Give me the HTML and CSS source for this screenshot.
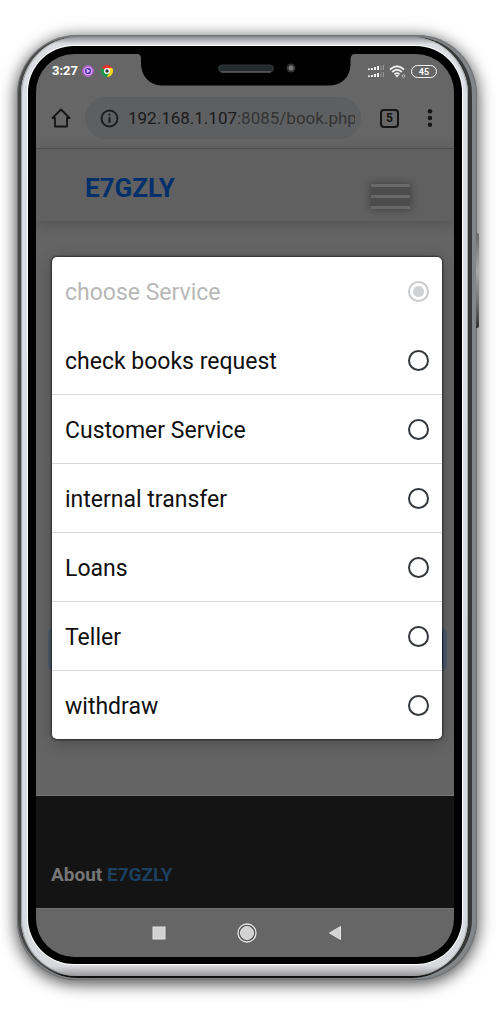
FILE: index.html
```html
<!DOCTYPE html>
<html lang="en">
<head>
<meta charset="utf-8">
<meta name="viewport" content="width=device-width, initial-scale=1">
<title>E7GZLY</title>
<link rel="stylesheet" href="styles.css">
</head>
<body>
<div class="phone">
  <span class="side-key"></span>
  <div class="rim">
    <div class="bezel">
      <div class="screen">
        <svg class="notch" viewBox="0 0 218 32" aria-hidden="true">
          <path d="M0 0C3 0 4 2 4 5V11C5 23 13 31 24 31.500H193C205 31 213 23 213.500 11V5C213.500 2 215 0 218 0Z" fill="#000"/>
          <rect x="81.500" y="11" width="55" height="7" rx="3.500" fill="#222b2e" stroke="#33393b"/>
          <path d="M84 18H134" stroke="#777" />
          <circle cx="154" cy="14" r="4.500" fill="#333"/>
          <circle cx="154" cy="14" r="2.500" fill="#777"/>
        </svg>
        <header class="status">
          <span class="clock">3:27</span>
          <svg class="app-icon" viewBox="0 0 12 12" aria-hidden="true">
            <circle cx="6" cy="6" r="5.300" fill="#b04ad8" stroke="#c76be0"/>
            <circle cx="6" cy="6" r="3.800" fill="#5a2fb5" stroke="#f1e6fb" stroke-width=".8"/>
            <path d="M4.700 3.700 8.300 6 4.700 8.300Z" fill="#d9b9f5"/>
          </svg>
          <svg class="app-icon chrome" viewBox="0 0 12 12" aria-hidden="true">
            <path d="M6 6 .8 3A6 6 0 0 1 11.200 3Z" fill="#e8302a"/>
            <path d="M6 6V3H11.200A6 6 0 0 1 6 12Z" fill="#fbd51c"/>
            <path d="M6 6 8.600 7.500 6 12A6 6 0 0 1 .8 3Z" fill="#159b48"/>
            <circle cx="6" cy="6" r="3" fill="#fff"/>
            <circle cx="6" cy="6" r="1.700" fill="#333"/>
          </svg>
          <svg class="signal" viewBox="0 0 16 12" aria-hidden="true">
            <path d="M1 5V3.500M4 5V3M7 5V2M10 5V1M1 12V10.500M4 12V10M7 12V9M10 12V8" stroke="#eee" stroke-width="2"/>
            <path d="M13 5V0.500M15.500 5V0M13 12V7.500M15.500 12V7" stroke="#999"/>
          </svg>
          <svg class="wifi" viewBox="0 0 17 13" aria-hidden="true">
            <path d="M1 4.500Q8 -2 15 4.500M3.200 7Q8 2.500 12.800 7M5.400 9.300Q8 7 10.600 9.300" fill="none" stroke="#eee" stroke-width="1.800"/>
            <path d="M6 10.300Q8 9 10 10.300L8 12.500Z" fill="#eee"/>
            <circle cx="14.500" cy="11" r="1.300" fill="none" stroke="#bbb"/>
          </svg>
          <span class="battery">45</span>
        </header>
        <div class="toolbar">
          <button class="tool" aria-label="Home">
            <svg width="20" height="20" viewBox="0 0 20 20"><path d="M1.500 10 10 1.500 18.500 10H16V18.500H4V10Z" fill="none" stroke="#151515" stroke-width="1.800" stroke-linejoin="round"/></svg>
          </button>
          <button class="address" aria-label="Address">
            <svg width="19" height="19" viewBox="0 0 19 19"><circle cx="9.500" cy="9.500" r="8" fill="none" stroke="#1c1c1c" stroke-width="1.900"/><path d="M9.500 8V14M9.500 4.700V6.600" stroke="#1c1c1c" stroke-width="2"/></svg>
            <span class="url"><span class="host">192.168.1.107</span>:8085/book.php</span>
          </button>
          <button class="tabs">5</button>
          <button class="tool" aria-label="Menu">
            <svg width="6" height="18" viewBox="0 0 6 18"><g fill="#151515"><circle cx="3" cy="2.300" r="2.200"/><circle cx="3" cy="9" r="2.200"/><circle cx="3" cy="15.700" r="2.200"/></g></svg>
          </button>
        </div>
        <nav class="site-nav">
          <a class="brand" href="#">E7GZLY</a>
          <button class="burger" aria-label="Navigation"><span></span><span></span><span></span></button>
        </nav>
        <main class="page">
          <span class="submit-glow"></span>
          <fieldset class="picker" aria-label="choose Service">
            <label class="option disabled">choose Service<input type="radio" name="service" checked disabled></label>
            <label class="option">check books request<input type="radio" name="service"></label>
            <label class="option">Customer Service<input type="radio" name="service"></label>
            <label class="option">internal transfer<input type="radio" name="service"></label>
            <label class="option">Loans<input type="radio" name="service"></label>
            <label class="option">Teller<input type="radio" name="service"></label>
            <label class="option">withdraw<input type="radio" name="service"></label>
          </fieldset>
        </main>
        <footer class="about">About <a href="#">E7GZLY</a></footer>
        <div class="keys">
          <button aria-label="Recent apps"><svg width="14" height="14" viewBox="0 0 14 14"><rect x="1" y="1" width="12" height="12" fill="#d2d2d2" stroke="#e2e2e2"/></svg></button>
          <button aria-label="Home"><svg width="20" height="20" viewBox="0 0 20 20"><circle cx="10" cy="10" r="9" fill="#555" stroke="#e8e8e8" stroke-width="1.300"/><circle cx="10" cy="10" r="6.500" fill="#d2d2d2" stroke="#e2e2e2"/></svg></button>
          <button aria-label="Back"><svg width="14" height="16" viewBox="0 0 14 16"><path d="M1.500 8 12.500 1.500V14.500Z" fill="#d2d2d2" stroke="#e2e2e2"/></svg></button>
        </div>
      </div>
    </div>
  </div>
</div>
</body>
</html>
```
FILE: styles.css
```css
* { box-sizing: border-box; }

body {
  margin: 0;
  padding: 35px 19px 37px 17px;
  background: #fff;
  font-family: Roboto, "Liberation Sans", sans-serif;
}

button {
  border: 0;
  padding: 0;
  background: none;
  font: inherit;
  color: inherit;
}

a { color: inherit; text-decoration: none; }

svg { display: block; flex: none; }

.phone {
  position: relative;
  padding: 2px 9px 4px 4px;
  border-radius: 60px;
  background: #84878a;
  box-shadow: 0 3px 16px 1px rgba(0, 0, 0, .7), inset 0 0 2px #444;
}

.side-key {
  position: absolute;
  top: 198px;
  right: -2px;
  width: 3px;
  height: 95px;
  border-radius: 0 2px 2px 0;
  background: linear-gradient(#666, #aaa 40%, #777 70%, #333);
}

.rim {
  padding: 9px 6px 12px 7px;
  border-radius: 57px;
  background: linear-gradient(#909294 0, #dcdde2 7px, #dcdfe6 60px, #d8dbe3 calc(100% - 60px), #d8d9dd calc(100% - 10px), #9a9a9c 100%);
  box-shadow: 4px 0 0 #383838, -3px 0 0 #484848, 0 2px 0 #111, inset 1px 0 1px #999, inset -1px 0 1px #aaa;
}

.bezel {
  padding: 8px 8px 7px;
  border-radius: 46px;
  background: #000;
  box-shadow: 0 0 0 1px #fff;
}

.screen {
  position: relative;
  overflow: hidden;
  border-radius: 38px;
  background: #666;
}

.notch {
  position: absolute;
  top: 0;
  left: 50%;
  width: 218px;
  height: 32px;
  margin-left: -108px;
}

.status {
  display: flex;
  align-items: center;
  height: 34px;
  padding: 0 17px 0 16px;
  color: #fff;
}

.clock { font-size: 13px; font-weight: 700; line-height: 34px; }

.app-icon { width: 12px; height: 12px; margin-left: 4px; }

.chrome { margin-left: 7px; }

.signal { width: 16px; height: 12px; margin-left: auto; }

.wifi { width: 17px; height: 13px; margin: 0 5px; }

.battery {
  width: 26px;
  height: 13px;
  border: 1px solid #f4f4f4;
  border-radius: 7px;
  font-size: 9px;
  font-weight: 700;
  line-height: 12px;
  text-align: center;
}

.toolbar {
  display: flex;
  align-items: center;
  height: 60px;
  padding: 0 21px 0 15px;
}

.address {
  display: flex;
  flex: 1;
  align-items: center;
  gap: 9px;
  min-width: 0;
  height: 42px;
  margin: 0 19px 0 14px;
  padding: 0 6px 0 15px;
  border-radius: 21px;
  background: #5e5f61;
  color: #333;
  font-size: 17px;
}

.url { flex: 1; overflow: hidden; white-space: nowrap; text-align: left; }

.host { color: #1a1a1a; }

.tabs {
  width: 19px;
  height: 19px;
  margin-right: 28px;
  border: 2px solid #151515;
  border-radius: 4px;
  color: #151515;
  font-size: 12px;
  font-weight: 700;
  line-height: 15px;
}

.site-nav {
  position: relative;
  z-index: 1;
  display: flex;
  align-items: center;
  justify-content: space-between;
  height: 73px;
  padding: 6px 44px 0 49px;
  border-top: 1px solid #4d4d4d;
  background: #606060;
  box-shadow: 0 2px 14px rgba(0, 0, 0, .2);
}

.brand {
  color: #00306c;
  font-size: 26px;
  font-weight: 700;
}

.burger {
  display: grid;
  gap: 8px;
  width: 39px;
  margin-top: 16px;
  background: rgba(0, 0, 0, .2);
  box-shadow: 0 0 8px 1px rgba(0, 0, 0, .3);
}

.burger span { height: 3px; background: #686868; }

.page {
  position: relative;
  padding: 36px 12px 56px 16px;
  background: #646464;
}

.submit-glow {
  position: absolute;
  top: 406px;
  right: 7px;
  left: 12px;
  height: 45px;
  border: 4px solid #4b5a6b;
  border-radius: 7px;
  background: #294666;
}

.picker {
  position: relative;
  margin: 0;
  padding: 0;
  border: 0;
  border-radius: 5px;
  background: #fff;
  box-shadow: 0 0 2px 1px rgba(0, 0, 0, .5), 0 4px 16px rgba(0, 0, 0, .25);
}

.option {
  display: flex;
  align-items: center;
  justify-content: space-between;
  height: 69px;
  padding: 3px 13px 0;
  border-bottom: 1px solid #d8d8d8;
  color: #101010;
  font-size: 23px;
}

.option.disabled { border-color: transparent; color: #b8b8b8; }

.option:last-child { height: 68px; border-bottom: 0; }

.option input {
  width: 21px;
  height: 21px;
  margin: 0 0 3px;
  border: 2px solid #34373c;
  border-radius: 50%;
  appearance: none;
}

.option input:disabled {
  border-color: #c9cbcd;
  background: radial-gradient(circle, #d0d1d3 5px, #fff 6px);
}

.about {
  padding: 67px 15px 22px;
  border-top: 1px solid #777;
  background: #141414;
  color: #777;
  font-size: 19px;
  font-weight: 700;
  line-height: 23px;
}

.about a { color: #1b4060; }

.keys {
  display: flex;
  align-items: center;
  justify-content: center;
  gap: 71px;
  height: 49px;
  padding-left: 3px;
  border-top: 1px solid #747474;
}
```
